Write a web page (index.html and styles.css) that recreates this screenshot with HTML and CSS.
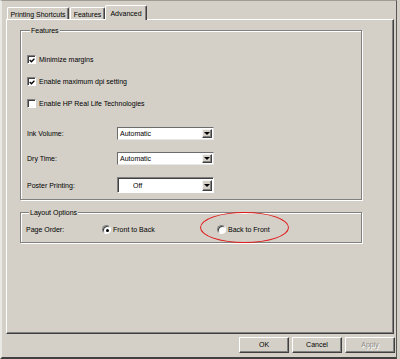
FILE: index.html
```html
<!DOCTYPE html>
<html>
<head>
<meta charset="utf-8">
<link rel="stylesheet" href="styles.css">
</head>
<body>
<div class="window">
  <div class="tabs">
    <div class="tab tab-short">Printing Shortcuts</div>
    <div class="tab tab-feat">Features</div>
    <div class="tab tab-adv active">Advanced</div>
  </div>
  <div class="panel">
    <fieldset class="group features">
      <legend>Features</legend>
      <div class="checks">
        <label class="check"><span class="box"><svg viewBox="0 0 7 7" width="7" height="7"><path d="M0.8 3 L2.8 5 L6.3 1.4" fill="none" stroke="#000" stroke-width="1.5"/></svg></span>Minimize margins</label>
        <label class="check"><span class="box"><svg viewBox="0 0 7 7" width="7" height="7"><path d="M0.8 3 L2.8 5 L6.3 1.4" fill="none" stroke="#000" stroke-width="1.5"/></svg></span>Enable maximum dpi setting</label>
        <label class="check"><span class="box"></span>Enable HP Real Life Technologies</label>
      </div>
      <div class="fields">
        <span class="flabel">Ink Volume:</span>
        <div class="select"><span class="value">Automatic</span><span class="drop"><span class="arrow"></span></span></div>
        <span class="flabel">Dry Time:</span>
        <div class="select"><span class="value">Automatic</span><span class="drop"><span class="arrow"></span></span></div>
        <span class="flabel">Poster Printing:</span>
        <div class="select poster"><span class="value">Off</span><span class="drop"><span class="arrow"></span></span></div>
      </div>
    </fieldset>
    <fieldset class="group layout">
      <legend>Layout Options</legend>
      <div class="order-row">
        <span class="olabel">Page Order:</span>
        <label class="radio first"><span class="dot on"></span>Front to Back</label>
        <label class="radio marked"><span class="dot"></span>Back to Front<span class="ring"></span></label>
      </div>
    </fieldset>
  </div>
  <div class="buttons">
    <div class="btn">OK</div>
    <div class="btn">Cancel</div>
    <div class="btn disabled">Apply</div>
  </div>
</div>
</body>
</html>
```
FILE: styles.css
```css
html, body {
  margin: 0;
  padding: 0;
  background: #d4d0c8;
}
body {
  font-family: "Liberation Sans", Arial, sans-serif;
  font-size: 7px;
  color: #000;
}
.window {
  box-sizing: border-box;
  width: 397px;
  height: 359px;
  background: #d4d0c8;
  border-top: 1px solid #a09c94;
  border-left: 2px solid #ebe9e4;
  border-right: 1px solid #5a5854;
  border-bottom: 2px solid #404040;
  padding: 4px 1px 0 4px;
  display: flex;
  flex-direction: column;
}
.tabs {
  display: flex;
  align-items: flex-end;
  height: 14px;
  padding-left: 1px;
}
.tab {
  box-sizing: border-box;
  height: 12px;
  line-height: 11px;
  padding-top: 1px;
  text-align: center;
  white-space: nowrap;
  background: #d4d0c8;
  border-top: 1px solid #fff;
  border-left: 1px solid #fff;
  border-right: 1px solid #404040;
  box-shadow: inset -1px 0 0 #808080;
  border-radius: 2px 2px 0 0;
}
.tab-short { width: 62px; margin-right: 1px; }
.tab-feat { width: 35px; }
.tab-adv { width: 42px; }
.tab.active {
  height: 15px;
  margin-bottom: -1px;
  line-height: 13px;
  z-index: 1;
}
.panel {
  box-sizing: border-box;
  width: 388px;
  height: 315px;
  border-top: 1px solid #fff;
  border-left: 1px solid #fff;
  border-right: 1px solid #404040;
  border-bottom: 1px solid #404040;
  box-shadow: inset -1px -1px 0 #808080;
  padding: 6px 0 0 13px;
}
.group {
  box-sizing: border-box;
  width: 342px;
  margin: 0;
  padding: 0;
  min-width: 0;
  border: 1px solid #808080;
  box-shadow: 1px 1px 0 #fff, inset 1px 1px 0 #fff;
}
.group legend {
  margin-left: 3px;
  padding: 0 1px;
  line-height: 9px;
  background: #d4d0c8;
}
.features {
  padding: 20px 0 6px 6px;
}
.checks {
  display: flex;
  flex-direction: column;
  gap: 13px;
}
.check {
  display: flex;
  align-items: center;
  gap: 3px;
  height: 9px;
  line-height: 9px;
}
.box {
  box-sizing: border-box;
  width: 9px;
  height: 9px;
  background: #fff;
  border: 1px solid;
  border-color: #808080 #fff #fff #808080;
  box-shadow: inset 1px 1px 0 #404040;
  display: flex;
  align-items: center;
  justify-content: center;
  padding: 1px 0 0 1px;
}
.box svg { display: block; }
.fields {
  margin-top: 19px;
  display: grid;
  grid-template-columns: 90px 97px;
  row-gap: 12px;
  align-items: center;
}
.flabel { line-height: 9px; }
.select {
  box-sizing: border-box;
  height: 13px;
  display: flex;
  background: #fff;
  border: 1px solid;
  border-color: #6c6c6c #e8e8e8 #e8e8e8 #6c6c6c;
  padding: 1px 1px 1px 0;
}
.select .value {
  flex: 1;
  padding-left: 2px;
  line-height: 9px;
}
.select.poster {
  height: 16px;
  border-color: #808080 #fff #fff #808080;
  box-shadow: inset 1px 1px 0 #404040;
  padding: 2px 1px 1px 1px;
}
.select.poster .value {
  padding-left: 14px;
  line-height: 11px;
}
.drop {
  box-sizing: border-box;
  width: 10px;
  background: #d4d0c8;
  border: 1px solid;
  border-color: #f4f4f4 #404040 #404040 #f4f4f4;
  box-shadow: inset -1px -1px 0 #808080;
  display: flex;
  align-items: center;
  justify-content: center;
}
.arrow {
  width: 0;
  height: 0;
  border-left: 3px solid transparent;
  border-right: 3px solid transparent;
  border-top: 3px solid #000;
  margin-right: 1px;
}
.layout {
  margin-top: 8px;
  padding: 8px 0 8px 5px;
}
.order-row {
  display: flex;
  align-items: center;
  height: 9px;
  line-height: 9px;
}
.olabel { width: 76px; }
.radio {
  display: flex;
  align-items: center;
  gap: 2px;
}
.radio.first { width: 115px; }
.radio.marked { position: relative; }
.dot {
  box-sizing: border-box;
  width: 9px;
  height: 9px;
  border-radius: 50%;
  background: #fff;
  border: 1px solid;
  border-color: #808080 #fff #fff #808080;
  box-shadow: inset 1px 1px 0 #404040;
  display: flex;
  align-items: center;
  justify-content: center;
}
.dot.on::after {
  content: "";
  width: 3px;
  height: 3px;
  border-radius: 50%;
  background: #000;
  margin: 1px 0 0 1px;
}
.ring {
  position: absolute;
  left: -17px;
  top: -13px;
  width: 89px;
  height: 31px;
  box-sizing: border-box;
  border: 1.5px solid #e01b1b;
  border-radius: 50%;
}
.buttons {
  margin-top: 3px;
  display: flex;
  justify-content: flex-end;
  gap: 3px;
}
.btn {
  box-sizing: border-box;
  width: 50px;
  height: 16px;
  line-height: 14px;
  text-align: center;
  background: #d4d0c8;
  border: 1px solid;
  border-color: #fff #404040 #404040 #fff;
  box-shadow: inset -1px -1px 0 #808080;
}
.btn.disabled {
  color: #8c8a84;
  text-shadow: 1px 1px 0 #fff;
}
```
